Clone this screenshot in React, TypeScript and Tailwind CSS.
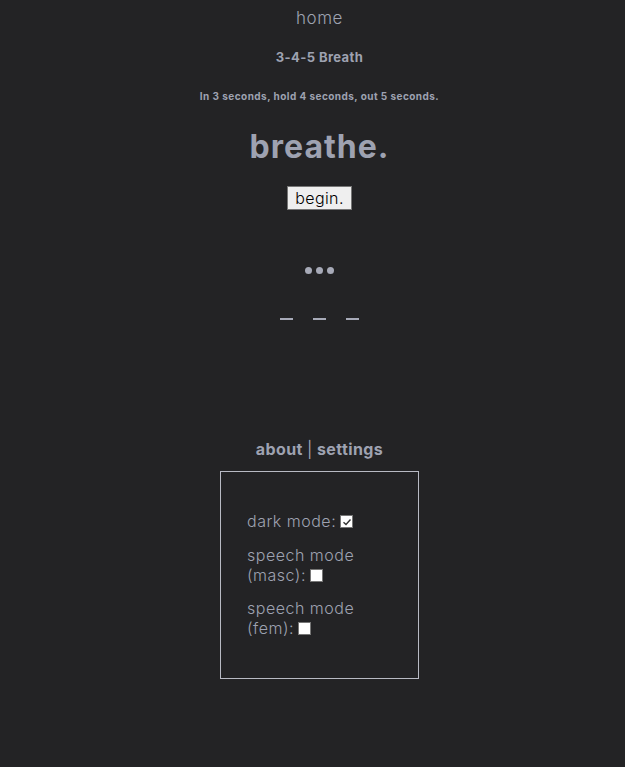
import React from "react";

function Check({ checked }: { checked?: boolean }) {
  return (
    <span className="inline-flex items-center justify-center w-[13px] h-[13px] bg-white border border-[#767676] align-middle ml-[4px] relative top-[-1px]">
      {checked && (
        <svg width="10" height="10" viewBox="0 0 10 10">
          <path d="M1.5 5.2 L4 7.5 L8.5 2.5" fill="none" stroke="#333" strokeWidth="1.4" />
        </svg>
      )}
    </span>
  );
}

export default function App() {
  const font = { fontFamily: "Inter, 'Noto Sans', sans-serif" };
  return (
    <div className="min-h-[767px] w-full bg-[#232325] text-[#9ea2b1] flex flex-col items-center pl-[14px]" style={font}>
      <div className="mt-[7px] h-[22px] leading-[22px] text-[17px] font-light tracking-[0.5px]">home</div>
      <div className="mt-[19px] h-[18px] leading-[18px] text-[13px] font-bold tracking-[0.4px]">3-4-5 Breath</div>
      <div className="mt-[23px] h-[14px] leading-[14px] text-[10px] font-bold tracking-[0.45px]">In 3 seconds, hold 4 seconds, out 5 seconds.</div>
      <div className="mt-[24px] h-[40px] leading-[40px] text-[32px] font-bold tracking-[1px]">breathe.</div>
      <button className="mt-[19px] h-[24px] px-[7px] bg-[#efefef] border border-[#767676] text-black text-[16px] leading-[20px] font-light tracking-[0.4px]">begin.</button>
      <div className="mt-[57px] flex gap-[4px]">
        <span className="w-[7px] h-[7px] rounded-full bg-[#a7aab8]" />
        <span className="w-[7px] h-[7px] rounded-full bg-[#a7aab8]" />
        <span className="w-[7px] h-[7px] rounded-full bg-[#a7aab8]" />
      </div>
      <div className="mt-[44px] flex gap-[20px]">
        <span className="w-[13px] h-[2px] bg-[#a7aab8]" />
        <span className="w-[13px] h-[2px] bg-[#a7aab8]" />
        <span className="w-[13px] h-[2px] bg-[#a7aab8]" />
      </div>
      <div className="mt-[118px] h-[22px] leading-[22px] text-[16px] font-bold tracking-[0.4px]">
        about <span className="font-normal">|</span> settings
      </div>
      <div className="mt-[11px] w-[199px] h-[208px] border border-[#b8bac4] pl-[26px] pr-[20px] pt-[39px] text-[16px] font-light leading-[20px] tracking-[0.5px]">
        <div>dark mode:<Check checked /></div>
        <div className="mt-[14px]">speech mode<br />(masc):<Check /></div>
        <div className="mt-[13px]">speech mode<br />(fem):<Check /></div>
      </div>
    </div>
  );
}
